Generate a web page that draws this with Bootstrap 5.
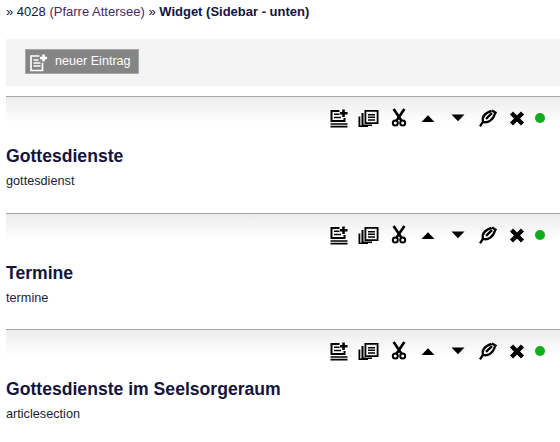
<!DOCTYPE html>
<html lang="en">
<head>
  <meta charset="UTF-8">
  <title>Widget (Sidebar - unten)</title>
  <link href="https://cdn.jsdelivr.net/npm/bootstrap@5.3.3/dist/css/bootstrap.min.css" rel="stylesheet">
  <style>
    html, body { height: 442px; overflow: hidden; }
    body {
      font-family: "Liberation Sans", Arial, sans-serif;
      font-size: 13px;
      color: #14143c;
      background: #fff;
    }
    .crumbs { height: 39px; padding: 4px 0 0 6px; line-height: 15px; }
    .crumbs a { color: #14143c; text-decoration: none; }
    .crumbs a span { color: #4a2a5e; }
    .crumbs b { font-weight: 700; }
    .topbar { height: 47px; margin-left: 6px; background: #f4f4f4; padding: 10px 0 0 19px; }
    .new-btn {
      width: 114px; height: 25px;
      background: #858585; border: 1px solid #a8a8a8;
      color: #fff; font-size: 12.6px; text-decoration: none;
      padding-left: 3px; gap: 6px;
    }
    .entry { height: 116.5px; margin-left: 6px; }
    .entry-first { margin-top: 10px; }
    .tools {
      height: 32px; padding: 11px 15px 0 0;
      border-top: 1px solid #a6a6a6;
      background: linear-gradient(#ececec, #fff) no-repeat 0 0 / 100% 26px;
    }
    .tool { display: block; width: 30px; height: 20px; flex: none; }
    .dot { width: 10px; height: 10px; border-radius: 50%; background: #11ad1b; margin-left: 3.5px; }
    .entry h2 { font-size: 17.6px; font-weight: 700; line-height: 21px; margin: 18px 0 7px; color: #14143c; }
    .entry p { margin: 0; line-height: 15px; font-size: 12.7px; color: #1c1c34; }
  </style>
</head>
<body>

<svg width="0" height="0" class="d-block">
  <defs>
    <symbol id="i-add" viewBox="0 0 30 20">
      <path d="M8.500 2H17.500V4H10.500V12H21.500V10H23.500V14H8.500z"/>
      <path d="M12 5.500h5.500V7H12zM12 8.800h7V10.300H12z"/>
      <path d="M20.200 1.500h2.600v2.500h2.700v2.600h-2.700v2.400h-2.600V6.600H18V4h2.200z"/>
      <path d="M8.500 15.200H25.500V16.800H8.500zM8.500 17.800H25.500V19.400H8.500z"/>
    </symbol>
    <symbol id="i-copy" viewBox="0 0 30 20">
      <path fill-rule="evenodd" d="M12.500 2h14V16h-14zM14.300 3.800V14.200H24.700V3.800z"/>
      <path d="M16 6h7v1.500H16zM16 8.600h7v1.500H16zM16 11.200h7v1.500H16z"/>
      <path d="M9.500 5h2v11.500h8.500V18H9.500z"/>
      <path d="M6.500 8.500h1.800V17.500H16V19H6.500z"/>
    </symbol>
    <symbol id="i-cut" viewBox="0 0 30 20">
      <path d="M11.600 1L19.400 12.600M22.400 1L14.600 12.600" fill="none" stroke="#000" stroke-width="2.600"/>
      <circle cx="13.300" cy="15" r="2.500" fill="none" stroke="#000" stroke-width="2"/>
      <circle cx="20.700" cy="15" r="2.500" fill="none" stroke="#000" stroke-width="2"/>
    </symbol>
    <symbol id="i-up" viewBox="0 0 30 20"><path d="M16 7.300L22.500 14H9.500z"/></symbol>
    <symbol id="i-down" viewBox="0 0 30 20"><path d="M9.500 6.500H22.500L16 13.200z"/></symbol>
    <symbol id="i-edit" viewBox="0 0 30 20">
      <path d="M8 18.300L11 13.700C9.800 9 13 5 19.500 2.800M11 13.700C15.500 15.500 21 12.500 23 5.500M14 10.800L20 5.200M20 2.500L24.500 5.300" fill="none" stroke="#000" stroke-width="2.300"/>
    </symbol>
    <symbol id="i-del" viewBox="0 0 30 20">
      <path d="M9.500 5L20.500 16M20.500 5L9.500 16" fill="none" stroke="#000" stroke-width="4.400"/>
    </symbol>
  </defs>
</svg>

<div class="crumbs">» <a href="#">4028 <span>(Pfarre Attersee)</span></a> » <b>Widget (Sidebar - unten)</b></div>

<div class="topbar">
  <a href="#" class="new-btn d-flex align-items-center">
    <svg width="20" height="20" viewBox="0 0 20 20" fill="none" stroke="#fff" stroke-width="1.700">
      <path d="M10.500 4H2v14.500h11.500V11"/>
      <path d="M4.500 8h5M4.500 11h7M4.500 14h7"/>
      <path d="M14.500 2.500v7M11 6h7" stroke-width="2.600"/>
    </svg>
    neuer Eintrag
  </a>
</div>

<div class="entry entry-first">
  <div class="tools d-flex justify-content-end align-items-center">
    <svg class="tool"><use href="#i-add"/></svg>
    <svg class="tool"><use href="#i-copy"/></svg>
    <svg class="tool"><use href="#i-cut"/></svg>
    <svg class="tool"><use href="#i-up"/></svg>
    <svg class="tool"><use href="#i-down"/></svg>
    <svg class="tool"><use href="#i-edit"/></svg>
    <svg class="tool"><use href="#i-del"/></svg>
    <span class="dot"></span>
  </div>
  <h2>Gottesdienste</h2>
  <p>gottesdienst</p>
</div>

<div class="entry">
  <div class="tools d-flex justify-content-end align-items-center">
    <svg class="tool"><use href="#i-add"/></svg>
    <svg class="tool"><use href="#i-copy"/></svg>
    <svg class="tool"><use href="#i-cut"/></svg>
    <svg class="tool"><use href="#i-up"/></svg>
    <svg class="tool"><use href="#i-down"/></svg>
    <svg class="tool"><use href="#i-edit"/></svg>
    <svg class="tool"><use href="#i-del"/></svg>
    <span class="dot"></span>
  </div>
  <h2>Termine</h2>
  <p>termine</p>
</div>

<div class="entry">
  <div class="tools d-flex justify-content-end align-items-center">
    <svg class="tool"><use href="#i-add"/></svg>
    <svg class="tool"><use href="#i-copy"/></svg>
    <svg class="tool"><use href="#i-cut"/></svg>
    <svg class="tool"><use href="#i-up"/></svg>
    <svg class="tool"><use href="#i-down"/></svg>
    <svg class="tool"><use href="#i-edit"/></svg>
    <svg class="tool"><use href="#i-del"/></svg>
    <span class="dot"></span>
  </div>
  <h2>Gottesdienste im Seelsorgeraum</h2>
  <p>articlesection</p>
</div>

<script src="https://cdn.jsdelivr.net/npm/bootstrap@5.3.3/dist/js/bootstrap.bundle.min.js"></script>
</body>
</html>
